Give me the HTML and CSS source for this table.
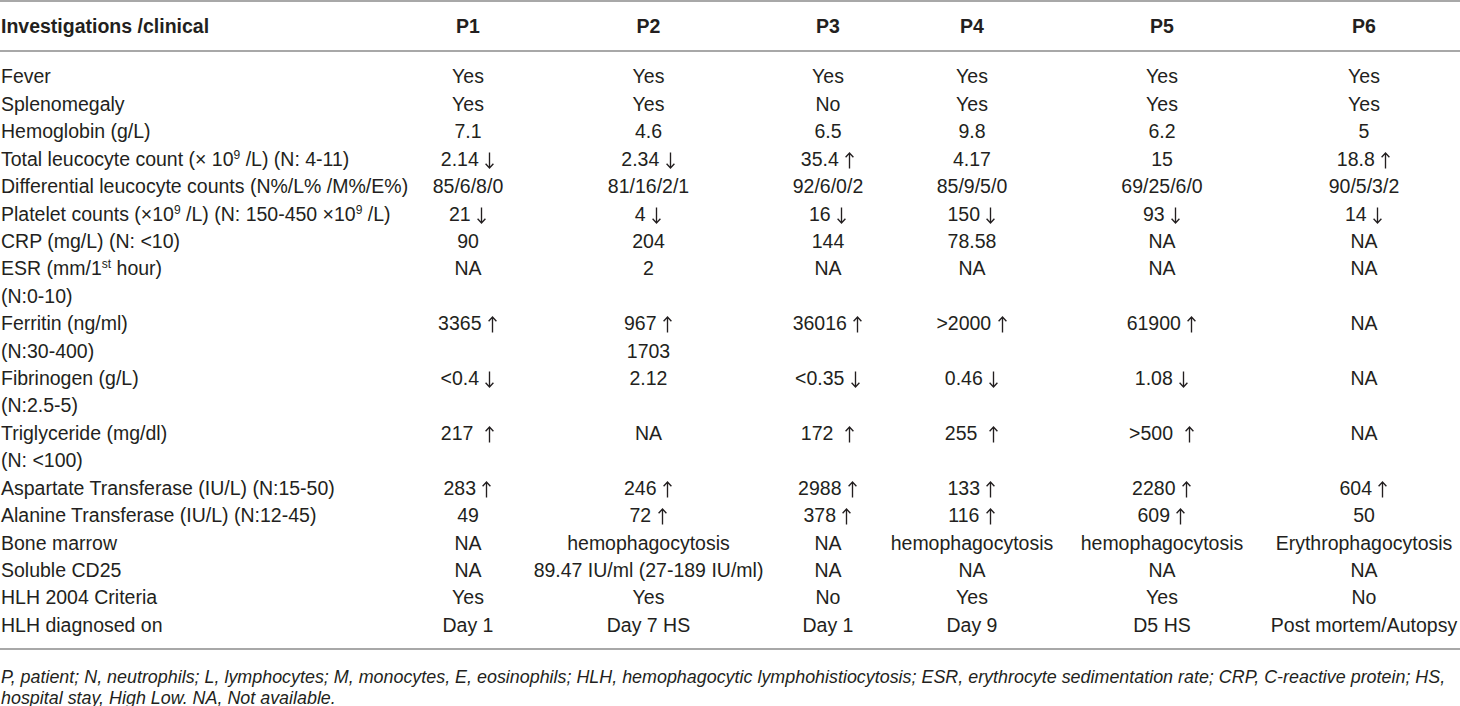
FILE: index.html
```html
<!DOCTYPE html>
<html lang="en">
<head>
<meta charset="utf-8">
<title>HLH investigations</title>
<link rel="stylesheet" href="styles.css">
</head>
<body>
<svg class="defs" width="0" height="0" aria-hidden="true">
  <symbol id="up" viewBox="0 0 11 17"><path d="M5.5 16.5V1M1.6 5.2L5.5 1L9.4 5.2"/></symbol>
  <symbol id="dn" viewBox="0 0 11 17"><path d="M5.5 0.5V16M1.6 11.8L5.5 16L9.4 11.8"/></symbol>
</svg>
<div class="sheet">
  <div class="thead">
    <div class="row head">
      <div class="lab">Investigations /clinical</div>
      <div class="val">P1</div>
      <div class="val">P2</div>
      <div class="val">P3</div>
      <div class="val">P4</div>
      <div class="val">P5</div>
      <div class="val">P6</div>
    </div>
  </div>
  <div class="tbody">
    <div class="row"><div class="lab">Fever</div><div class="val">Yes</div><div class="val">Yes</div><div class="val">Yes</div><div class="val">Yes</div><div class="val">Yes</div><div class="val">Yes</div></div>
    <div class="row"><div class="lab">Splenomegaly</div><div class="val">Yes</div><div class="val">Yes</div><div class="val">No</div><div class="val">Yes</div><div class="val">Yes</div><div class="val">Yes</div></div>
    <div class="row"><div class="lab">Hemoglobin (g/L)</div><div class="val">7.1</div><div class="val">4.6</div><div class="val">6.5</div><div class="val">9.8</div><div class="val">6.2</div><div class="val">5</div></div>
    <div class="row"><div class="lab">Total leucocyte count (× 10<sup>9</sup> /L) (N: 4-11)</div><div class="val"><span>2.14 <svg class="ar"><use href="#dn"/></svg></span></div><div class="val"><span>2.34 <svg class="ar"><use href="#dn"/></svg></span></div><div class="val"><span>35.4 <svg class="ar"><use href="#up"/></svg></span></div><div class="val">4.17</div><div class="val">15</div><div class="val"><span>18.8 <svg class="ar"><use href="#up"/></svg></span></div></div>
    <div class="row"><div class="lab">Differential leucocyte counts (N%/L% /M%/E%)</div><div class="val">85/6/8/0</div><div class="val">81/16/2/1</div><div class="val">92/6/0/2</div><div class="val">85/9/5/0</div><div class="val">69/25/6/0</div><div class="val">90/5/3/2</div></div>
    <div class="row"><div class="lab">Platelet counts (×10<sup>9</sup> /L) (N: 150-450 ×10<sup>9</sup> /L)</div><div class="val"><span>21 <svg class="ar"><use href="#dn"/></svg></span></div><div class="val"><span>4 <svg class="ar"><use href="#dn"/></svg></span></div><div class="val"><span>16 <svg class="ar"><use href="#dn"/></svg></span></div><div class="val"><span>150 <svg class="ar"><use href="#dn"/></svg></span></div><div class="val"><span>93 <svg class="ar"><use href="#dn"/></svg></span></div><div class="val"><span>14 <svg class="ar"><use href="#dn"/></svg></span></div></div>
    <div class="row"><div class="lab">CRP (mg/L) (N: &lt;10)</div><div class="val">90</div><div class="val">204</div><div class="val">144</div><div class="val">78.58</div><div class="val">NA</div><div class="val">NA</div></div>
    <div class="row"><div class="lab">ESR (mm/1<sup>st</sup> hour)<br>(N:0-10)</div><div class="val">NA</div><div class="val">2</div><div class="val">NA</div><div class="val">NA</div><div class="val">NA</div><div class="val">NA</div></div>
    <div class="row"><div class="lab">Ferritin (ng/ml)<br>(N:30-400)</div><div class="val"><span>3365 <svg class="ar"><use href="#up"/></svg></span></div><div class="val"><span>967 <svg class="ar"><use href="#up"/></svg><br>1703</span></div><div class="val"><span>36016 <svg class="ar"><use href="#up"/></svg></span></div><div class="val"><span>&gt;2000 <svg class="ar"><use href="#up"/></svg></span></div><div class="val"><span>61900 <svg class="ar"><use href="#up"/></svg></span></div><div class="val">NA</div></div>
    <div class="row"><div class="lab">Fibrinogen (g/L)<br>(N:2.5-5)</div><div class="val"><span>&lt;0.4 <svg class="ar"><use href="#dn"/></svg></span></div><div class="val">2.12</div><div class="val"><span>&lt;0.35 <svg class="ar"><use href="#dn"/></svg></span></div><div class="val"><span>0.46 <svg class="ar"><use href="#dn"/></svg></span></div><div class="val"><span>1.08 <svg class="ar"><use href="#dn"/></svg></span></div><div class="val">NA</div></div>
    <div class="row"><div class="lab">Triglyceride (mg/dl)<br>(N: &lt;100)</div><div class="val"><span>217&nbsp; <svg class="ar"><use href="#up"/></svg></span></div><div class="val">NA</div><div class="val"><span>172&nbsp; <svg class="ar"><use href="#up"/></svg></span></div><div class="val"><span>255&nbsp; <svg class="ar"><use href="#up"/></svg></span></div><div class="val"><span>&gt;500&nbsp; <svg class="ar"><use href="#up"/></svg></span></div><div class="val">NA</div></div>
    <div class="row"><div class="lab">Aspartate Transferase (IU/L) (N:15-50)</div><div class="val"><span>283 <svg class="ar"><use href="#up"/></svg></span></div><div class="val"><span>246 <svg class="ar"><use href="#up"/></svg></span></div><div class="val"><span>2988 <svg class="ar"><use href="#up"/></svg></span></div><div class="val"><span>133 <svg class="ar"><use href="#up"/></svg></span></div><div class="val"><span>2280 <svg class="ar"><use href="#up"/></svg></span></div><div class="val"><span>604 <svg class="ar"><use href="#up"/></svg></span></div></div>
    <div class="row"><div class="lab">Alanine Transferase (IU/L) (N:12-45)</div><div class="val">49</div><div class="val"><span>72 <svg class="ar"><use href="#up"/></svg></span></div><div class="val"><span>378 <svg class="ar"><use href="#up"/></svg></span></div><div class="val"><span>116 <svg class="ar"><use href="#up"/></svg></span></div><div class="val"><span>609 <svg class="ar"><use href="#up"/></svg></span></div><div class="val">50</div></div>
    <div class="row"><div class="lab">Bone marrow</div><div class="val">NA</div><div class="val">hemophagocytosis</div><div class="val">NA</div><div class="val">hemophagocytosis</div><div class="val">hemophagocytosis</div><div class="val">Erythrophagocytosis</div></div>
    <div class="row"><div class="lab">Soluble CD25</div><div class="val">NA</div><div class="val">89.47 IU/ml (27-189 IU/ml)</div><div class="val">NA</div><div class="val">NA</div><div class="val">NA</div><div class="val">NA</div></div>
    <div class="row"><div class="lab">HLH 2004 Criteria</div><div class="val">Yes</div><div class="val">Yes</div><div class="val">No</div><div class="val">Yes</div><div class="val">Yes</div><div class="val">No</div></div>
    <div class="row"><div class="lab">HLH diagnosed on</div><div class="val">Day 1</div><div class="val">Day 7 HS</div><div class="val">Day 1</div><div class="val">Day 9</div><div class="val">D5 HS</div><div class="val">Post mortem/Autopsy</div></div>
  </div>
  <p class="note">P, patient; N, neutrophils; L, lymphocytes; M, monocytes, E, eosinophils; HLH, hemophagocytic lymphohistiocytosis; ESR, erythrocyte sedimentation rate; CRP, C-reactive protein; HS,<br>hospital stay, High Low. NA, Not available.</p>
</div>
</body>
</html>
```
FILE: styles.css
```css
html, body {
  margin: 0;
  padding: 0;
  background: #ffffff;
}

body {
  width: 1460px;
  height: 706px;
  overflow: hidden;
  font-family: "Liberation Sans", Arial, sans-serif;
  font-size: 19.5px;
  line-height: 27.42px;
  color: #231f20;
}

.defs {
  position: absolute;
  width: 0;
  height: 0;
  overflow: hidden;
}

.sheet {
  width: 1460px;
}

.thead {
  border-top: 2px solid #a8a8a8;
  border-bottom: 2px solid #a8a8a8;
  padding: 11px 0 10px;
}

.tbody {
  border-bottom: 2px solid #a8a8a8;
  padding: 11px 0 9px;
}

.row {
  display: grid;
  grid-template-columns: 410px 116px 245px 114px 174px 206px 1fr;
}

.head {
  font-weight: bold;
}

.lab {
  padding-left: 1px;
  white-space: nowrap;
}

.val {
  display: flex;
  flex-direction: column;
  align-items: center;
  text-align: center;
  white-space: nowrap;
}

.row > .val:last-child {
  padding-left: 3px;
}

.ar {
  width: 11px;
  height: 17px;
  vertical-align: -3px;
  fill: none;
  stroke: currentColor;
  stroke-width: 1.35;
  stroke-linecap: butt;
  stroke-linejoin: miter;
}

sup {
  font-size: 0.62em;
  line-height: 0;
  vertical-align: 0.55em;
}

.note {
  margin: 17px 0 0;
  padding-left: 1px;
  font-style: italic;
  font-size: 17.9px;
  line-height: 21px;
}
```
